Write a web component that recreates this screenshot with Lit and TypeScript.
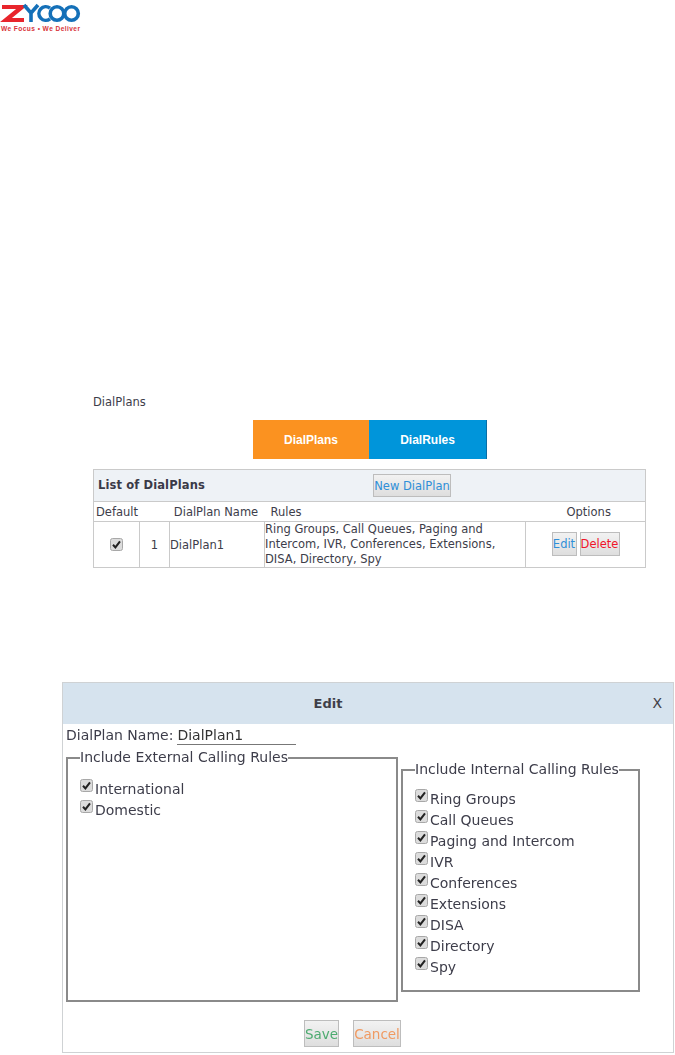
import { LitElement, html, css, svg } from "lit";
import { customElement } from "lit/decorators.js";

const check = html`<svg class="cb" viewBox="0 0 13 13" width="13" height="13">
  <rect x="0.5" y="0.5" width="12" height="12" rx="2" fill="#dcdcdc" stroke="#a8a8a8"/>
  <path d="M3 6.8 L5.4 9.4 L10 3.4" fill="none" stroke="#222" stroke-width="2"/>
</svg>`;

const logo = svg`<svg class="logo" viewBox="0 0 82 32" width="82" height="32">
  <path d="M2 7 H22 L6 20 H24" fill="none" stroke="#e8252c" stroke-width="4.2"/>
  <path d="M24 5 L31 13 L38 5 M31 13 V22" fill="none" stroke="#1470b8" stroke-width="3.6"/>
  <path d="M50 8.2 A6.8 6.8 0 1 0 50 18.8" fill="none" stroke="#1470b8" stroke-width="3.6"/>
  <circle cx="57" cy="13.5" r="6.8" fill="none" stroke="#1470b8" stroke-width="3.6"/>
  <circle cx="71.5" cy="13.5" r="6.8" fill="none" stroke="#1470b8" stroke-width="3.6"/>
  <text x="1" y="30.5" font-family="Liberation Sans, sans-serif" font-size="6.6" font-weight="700" fill="#d8343a" textLength="79">We Focus • We Deliver</text>
</svg>`;

@customElement("app-root")
class AppRoot extends LitElement {
  static styles = css`
    :host { display: block; width: 675px; height: 1055px; overflow: hidden; background: #fff;
      font-family: "DejaVu Sans", Verdana, sans-serif; font-size: 11.5px; color: #3d3d4a; }
    .logo { display: block; }
    .cb { display: block; flex: none; }
    .list { margin: 361px 29px 0 93px; }
    .title { height: 27px; line-height: 18px; }
    .tabs { display: flex; padding-left: 160px; height: 39px; font-family: "Liberation Sans", Arial, sans-serif; font-size: 12px; font-weight: 700; color: #fff; }
    .tab { display: flex; align-items: center; justify-content: center; }
    .tab.a { width: 116px; background: #fb9220; }
    .tab.b { width: 117px; background: #0095da; border-right: 1px solid #0a6ea5; }
    table { width: 553px; margin-top: 10px; border-collapse: collapse; table-layout: fixed; border: 1px solid #cacaca; background: #fff; }
    td { padding: 0; }
    .hd td { height: 31px; background: #eef2f6; border-bottom: 1px solid #cacaca; }
    .hd .inner { display: grid; grid-template-columns: 275px auto; align-items: center; padding-left: 4px; }
    .hd b { font-size: 11.5px; letter-spacing: 0.12px; color: #3a3a48; padding-bottom: 2px; }
    .btn { border: 1px solid #bdbdbd; background: linear-gradient(#f2f2f2, #dedede); padding: 0; font: inherit; display: inline-flex; align-items: center; justify-content: center; }
    .new { width: 78px; height: 23px; color: #2f8fd8; }
    .cols td { height: 19px; border-bottom: 1px solid #cacaca; white-space: nowrap; }
    .cols .l { padding-left: 2px; }
    .cols .n { padding-right: 2px; text-align: center; }
    .cols .r { padding-left: 6px; }
    .cols .o { padding-left: 41px; }
    .row td { height: 45px; }
    .row td + td { border-left: 1px solid #cacaca; }
    .c { text-align: center; }
    .cbwrap { display: flex; justify-content: center; }
    .row .rules { line-height: 15px; }
    .opts { display: flex; justify-content: center; gap: 3px; padding-bottom: 2px; }
    .edit { width: 25px; height: 24px; color: #2f8fd8; }
    .del { width: 40px; height: 24px; color: #f0142a; }

    .dialog { margin: 114px 1px 0 62px; height: 371px; box-sizing: border-box; border: 1px solid #cfd2d4; filter: blur(0.4px); font-size: 14px; display: flex; flex-direction: column; }
    .dh { height: 41px; flex: none; background: #d6e3ee; display: flex; align-items: center; justify-content: center; padding-right: 80px; position: relative; font-size: 13px; font-weight: 700; color: #3f3f49; }
    .x { position: absolute; right: 11px; top: 12px; font-weight: 400; font-size: 14px; }
    .name { display: flex; padding: 2px 0 0 3px; height: 19px; line-height: 19px; gap: 4px; }
    .name span.v { width: 119px; border-bottom: 1px solid #777; height: 18px; color: #333; }
    .sets { display: flex; align-items: flex-start; padding-left: 3px; gap: 3px; margin-top: 3px; }
    fieldset { margin: 0; padding: 0; border: 2px solid #8a8a8a; box-sizing: border-box; min-width: 0; }
    legend { padding: 0 0 2px; margin-left: 0; line-height: 18px; }
    .ext { width: 332px; height: 254px; padding: 10px 0 0 12px; }
    .int { width: 239px; height: 232px; margin-top: 12px; padding: 8px 0 0 12px; }
    .item { display: flex; height: 21px; line-height: 22px; }
    .item .cb { margin-top: 1px; margin-right: 2px; }
    .foot { display: flex; padding-left: 241px; gap: 14px; margin-top: 18px; }
    .foot .btn { height: 27px; font-size: 13.5px; }
    .save { width: 35px; color: #4dab70; }
    .cancel { width: 48px; color: #f09a62; }
  `;

  render() {
    const ext = ["International", "Domestic"];
    const int = ["Ring Groups", "Call Queues", "Paging and Intercom", "IVR", "Conferences", "Extensions", "DISA", "Directory", "Spy"];
    const items = (l: string[]) => l.map((t) => html`<div class="item">${check}<span>${t}</span></div>`);
    return html`
      ${logo}
      <section class="list">
        <div class="title">DialPlans</div>
        <div class="tabs"><div class="tab a">DialPlans</div><div class="tab b">DialRules</div></div>
        <table>
          <colgroup><col style="width:46px"><col style="width:30px"><col style="width:95px"><col style="width:261px"><col></colgroup>
          <tr class="hd"><td colspan="5"><div class="inner"><b>List of DialPlans</b><button class="btn new">New DialPlan</button></div></td></tr>
          <tr class="cols"><td class="l">Default</td><td></td><td class="n">DialPlan Name</td><td class="r">Rules</td><td class="o">Options</td></tr>
          <tr class="row">
            <td><div class="cbwrap">${check}</div></td>
            <td class="c">1</td>
            <td>DialPlan1</td>
            <td class="rules">Ring Groups, Call Queues, Paging and Intercom, IVR, Conferences, Extensions, DISA, Directory, Spy</td>
            <td><div class="opts"><button class="btn edit">Edit</button><button class="btn del">Delete</button></div></td>
          </tr>
        </table>
      </section>
      <section class="dialog">
        <div class="dh">Edit<span class="x">X</span></div>
        <div class="name"><span>DialPlan Name:</span><span class="v">DialPlan1</span></div>
        <div class="sets">
          <fieldset class="ext"><legend>Include External Calling Rules</legend>${items(ext)}</fieldset>
          <fieldset class="int"><legend>Include Internal Calling Rules</legend>${items(int)}</fieldset>
        </div>
        <div class="foot"><button class="btn save">Save</button><button class="btn cancel">Cancel</button></div>
      </section>
    `;
  }
}
